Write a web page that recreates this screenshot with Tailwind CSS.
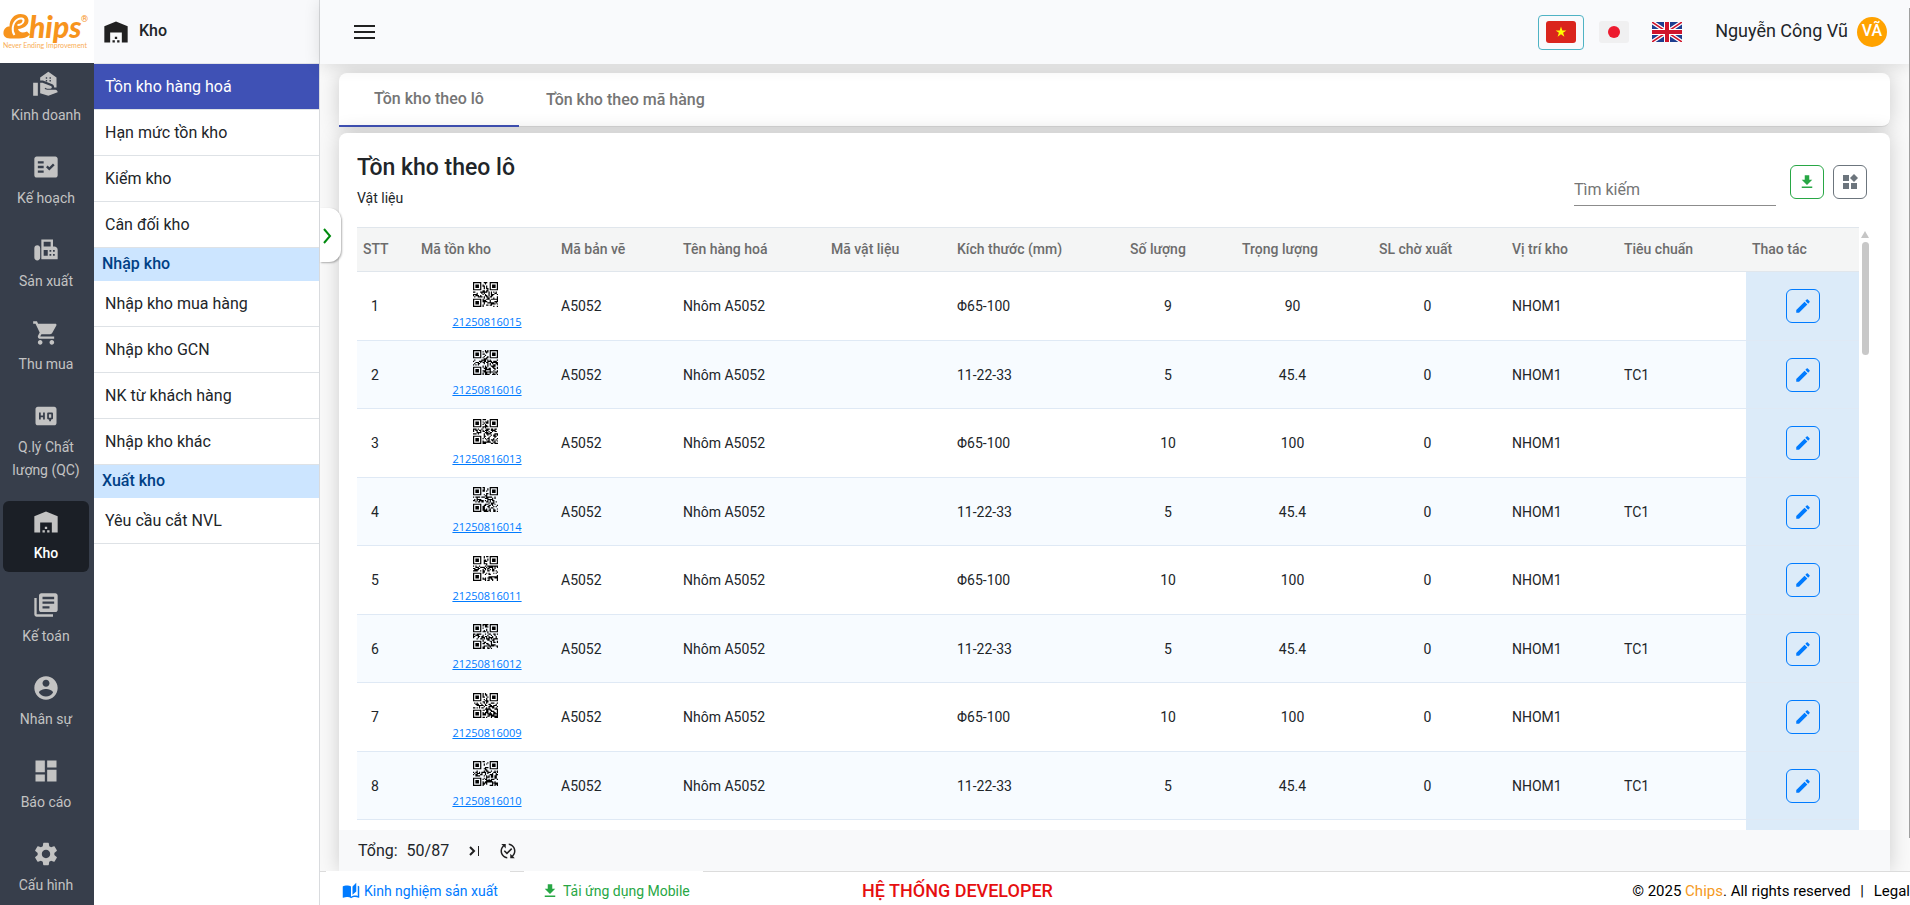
<!DOCTYPE html>
<html lang="vi">
<head>
  <meta charset="UTF-8">
  <meta name="viewport" content="width=device-width, initial-scale=1.0">
  <title>Tồn kho theo lô</title>
  <script src="https://cdn.jsdelivr.net/npm/@tailwindcss/browser@4"></script>
</head>
<body class="h-screen flex overflow-hidden bg-white font-[Roboto,sans-serif] text-[#212529]">

  <!-- Icon set -->
  <svg class="hidden">
    <symbol id="i-sales" viewBox="0 0 24 24"><path d="M1 11h4v11H1zM20 17h-7l-2.1-.7.3-1L13 16h2.8c.7 0 1.2-.5 1.2-1.2 0-.5-.3-.9-.8-1.1L9 11H7v9l7 2 8-3c0-1.100-.9-2-2-2z"/><path fill-rule="evenodd" d="M14 1.500L7 6.500V9h2.400l8 3.200c1 .4 1.600 1.500 1.600 2.800h2V6.500zM11.800 6.200h1.200v1.200h-1.200zM15 6.200h1.200v1.200H15zM11.800 8.600h1.200v1.200h-1.200zM15 8.600h1.200v1.200H15z"/></symbol>
    <symbol id="i-plan" viewBox="0 0 24 24"><path fill-rule="evenodd" d="M20 3H4c-1.100 0-2 .9-2 2v14c0 1.100.9 2 2 2h16c1.100 0 2-.9 2-2V5c0-1.100-.9-2-2-2zM10 17H5v-2h5v2zm0-4H5v-2h5v2zm0-4H5V7h5v2zm4.820 6L12 12.160l1.410-1.410 1.410 1.420L17.990 9l1.420 1.420L14.820 15z"/></symbol>
    <symbol id="i-fax" viewBox="0 0 24 24"><path fill-rule="evenodd" d="M4.500 8C3.100 8 2 9.100 2 10.500v8C2 19.900 3.100 21 4.500 21S7 19.900 7 18.500v-8C7 9.100 5.900 8 4.500 8zM19 9h-1V3H8v17h14v-8c0-1.700-1.300-3-3-3zM10 5h6v4h-6zM10 12h3.500v5H10zM15 12h1.500v1.500H15zM18 12h1.500v1.500H18zM15 15.500h1.500V17H15zM18 15.500h1.500V17H18z"/></symbol>
    <symbol id="i-cart" viewBox="0 0 24 24"><path d="M7 18c-1.100 0-1.990.9-1.990 2S5.900 22 7 22s2-.9 2-2-.9-2-2-2zM1 2v2h2l3.600 7.590-1.350 2.450c-.16.28-.25.61-.25.96 0 1.100.9 2 2 2h12v-2H7.420c-.14 0-.25-.11-.25-.25l.03-.12.9-1.630h7.450c.75 0 1.410-.41 1.750-1.030l3.580-6.490c.08-.14.12-.31.12-.48 0-.55-.45-1-1-1H5.210l-.94-2H1zm16 16c-1.100 0-1.990.9-1.990 2s.89 2 1.990 2 2-.9 2-2-.9-2-2-2z"/></symbol>
    <symbol id="i-hq" viewBox="0 0 24 24"><path d="M19 4H5c-1.110 0-2 .9-2 2v12c0 1.100.89 2 2 2h14c1.100 0 2-.9 2-2V6c0-1.100-.9-2-2-2zm-8 11H9.500v-2h-2v2H6V9h1.500v2.500h2V9H11v6zm7-1c0 .55-.45 1-1 1h-.75v1.500h-1.500V15H14c-.55 0-1-.45-1-1v-4c0-.55.45-1 1-1h3c.55 0 1 .45 1 1v4zm-3.500-.5h2v-3h-2v3z"/></symbol>
    <symbol id="i-warehouse" viewBox="0 0 24 24"><path d="M2 21h5v-8.500h10V21h5V7L12 3 2 7v14zM9 19h2v2H9zM11 16h2v2h-2zM13 19h2v2h-2z"/></symbol>
    <symbol id="i-books" viewBox="0 0 24 24"><path d="M4 6H2v14c0 1.100.9 2 2 2h14v-2H4V6zm16-4H8c-1.100 0-2 .9-2 2v12c0 1.100.9 2 2 2h12c1.100 0 2-.9 2-2V4c0-1.100-.9-2-2-2zm-1 9H9V9h10v2zm-4 4H9v-2h6v2zm4-8H9V5h10v2z"/></symbol>
    <symbol id="i-user" viewBox="0 0 24 24"><path d="M12 2C6.480 2 2 6.480 2 12s4.480 10 10 10 10-4.480 10-10S17.520 2 12 2zm0 3c1.660 0 3 1.340 3 3s-1.340 3-3 3-3-1.340-3-3 1.340-3 3-3zm0 14.200c-2.500 0-4.710-1.280-6-3.220.03-1.990 4-3.080 6-3.080 1.990 0 5.970 1.090 6 3.080-1.290 1.940-3.500 3.220-6 3.220z"/></symbol>
    <symbol id="i-dashboard" viewBox="0 0 24 24"><path d="M3 13h8V3H3v10zm0 8h8v-6H3v6zm10 0h8V11h-8v10zm0-18v6h8V3h-8z"/></symbol>
    <symbol id="i-settings" viewBox="0 0 24 24"><path d="M19.140 12.940c.04-.3.060-.61.060-.94 0-.32-.02-.64-.07-.94l2.030-1.580c.18-.14.23-.41.12-.61l-1.920-3.320c-.12-.22-.37-.29-.59-.22l-2.390.96c-.5-.38-1.030-.7-1.620-.94l-.36-2.540c-.04-.24-.24-.41-.48-.41h-3.840c-.24 0-.43.17-.47.41l-.36 2.540c-.59.24-1.130.57-1.620.94l-2.390-.96c-.22-.08-.47 0-.59.22L2.740 8.870c-.12.21-.08.47.12.61l2.030 1.580c-.05.3-.09.63-.09.94s.02.64.07.94l-2.030 1.580c-.18.14-.23.41-.12.61l1.920 3.320c.12.22.37.29.59.22l2.390-.96c.5.38 1.030.7 1.620.94l.36 2.540c.05.24.24.41.48.41h3.840c.24 0 .44-.17.47-.41l.36-2.540c.59-.24 1.130-.56 1.620-.94l2.390.96c.22.08.47 0 .59-.22l1.920-3.320c.12-.22.070-.47-.12-.61l-2.010-1.580zM12 15.600c-1.980 0-3.600-1.620-3.600-3.600s1.620-3.600 3.600-3.600 3.600 1.620 3.600 3.600-1.620 3.600-3.600 3.600z"/></symbol>
    <symbol id="i-download" viewBox="0 0 24 24"><path d="M5 20h14v-2H5v2zM19 9h-4V3H9v6H5l7 7 7-7z"/></symbol>
    <symbol id="i-edit" viewBox="0 0 24 24"><path d="M3 17.250V21h3.750L17.810 9.940l-3.750-3.750L3 17.250zM20.710 7.040c.39-.39.39-1.020 0-1.410l-2.340-2.340c-.39-.39-1.020-.39-1.410 0l-1.830 1.830 3.750 3.750 1.830-1.830z"/></symbol>
    <symbol id="i-refresh" viewBox="0 0 24 24"><path d="M17.660 9.530l-7.070 7.070-4.240-4.240 1.410-1.410 2.830 2.830 5.660-5.660 1.410 1.410zM4 12c0-2.330 1.020-4.420 2.620-5.880L9 8.500v-6H3l2.200 2.200C3.240 6.520 2 9.110 2 12c0 5.190 3.950 9.450 9 9.950v-2.020c-3.940-.49-7-3.860-7-7.930zm18 0c0-5.190-3.950-9.450-9-9.950v2.020c3.940.49 7 3.860 7 7.930 0 2.330-1.020 4.420-2.620 5.880L15 15.500v6h6l-2.200-2.200c1.960-1.820 3.200-4.410 3.200-7.300z"/></symbol>
    <symbol id="i-book" viewBox="0 0 24 24"><path d="M19 1l-5 5v11l5-4.500V1zM1 6v14.650c0 .25.25.5.5.5C3.100 20.450 5.050 20 6.500 20c1.950 0 4.050.4 5.500 1.500V6c-1.450-1.100-3.550-1.500-5.500-1.500S2.450 4.900 1 6zM23 19.500V6c-.6-.45-1.250-.75-2-1v13.500c-1.100-.35-2.300-.5-3.500-.5-1.700 0-4.150.65-5.500 1.500v2c1.350-.85 3.800-1.500 5.500-1.500 1.650 0 3.350.3 4.750 1.050.4.150.75-.15.75-.45z"/></symbol>
  </svg>

  <!-- Main menu -->
  <aside class="w-[94px] shrink-0 flex flex-col bg-[#373e4b]">
    <a href="#" class="h-[63px] bg-white shrink-0" aria-label="Chips">
      <svg width="94" height="63" viewBox="0 0 94 63">
        <path fill="#f7941d" d="M10 38.500C5 38.500 3 35.500 3.500 32c.5-3.500 3-5.500 6-5.500C9.500 19.500 14 14 20.500 14c5 0 8 2.800 8 6.500 0 4.500-4 8-10.500 8.500 1 3.500 4.500 4.500 9 2.500l3 3c-3 3-7 4-11 4z"/>
        <path fill="none" stroke="#fff" stroke-width="2" d="M14.500 35c-3-4-2.500-12 3-15.500 3-2 6.500-1 6 1.500-.5 2.500-3.500 4-6 4"/>
        <text x="29" y="38" font-family="Lato" font-weight="900" font-style="italic" font-size="30" fill="#f7941d">hips</text>
        <text x="81" y="22" font-family="Roboto" font-weight="500" font-size="9" fill="#f7941d">®</text>
        <text x="3" y="48" font-family="Lato" font-size="7" fill="#f9ae56">Never Ending Improvement</text>
      </svg>
    </a>
    <nav class="flex flex-col gap-3 pl-[3px] pr-[5px] text-center text-sm leading-[23px] text-[#c3c3c3] fill-[#c3c3c3]">
      <a href="#" class="flex flex-col items-center gap-[6px] rounded-md px-1 py-[7px]"><svg class="size-7"><use href="#i-sales"/></svg>Kinh doanh</a>
      <a href="#" class="flex flex-col items-center gap-[6px] rounded-md px-1 py-[7px]"><svg class="size-7"><use href="#i-plan"/></svg>Kế hoạch</a>
      <a href="#" class="flex flex-col items-center gap-[6px] rounded-md px-1 py-[7px]"><svg class="size-7"><use href="#i-fax"/></svg>Sản xuất</a>
      <a href="#" class="flex flex-col items-center gap-[6px] rounded-md px-1 py-[7px]"><svg class="size-7"><use href="#i-cart"/></svg>Thu mua</a>
      <a href="#" class="flex flex-col items-center gap-[6px] rounded-md px-1 py-[7px]"><svg class="size-7"><use href="#i-hq"/></svg>Q.lý Chất lượng (QC)</a>
      <a href="#" class="flex flex-col items-center gap-[6px] rounded-md px-1 py-[7px] bg-[#1b1f26] font-medium text-white" aria-current="page"><svg class="size-7"><use href="#i-warehouse"/></svg>Kho</a>
      <a href="#" class="flex flex-col items-center gap-[6px] rounded-md px-1 py-[7px]"><svg class="size-7"><use href="#i-books"/></svg>Kế toán</a>
      <a href="#" class="flex flex-col items-center gap-[6px] rounded-md px-1 py-[7px]"><svg class="size-7"><use href="#i-user"/></svg>Nhân sự</a>
      <a href="#" class="flex flex-col items-center gap-[6px] rounded-md px-1 py-[7px]"><svg class="size-7"><use href="#i-dashboard"/></svg>Báo cáo</a>
      <a href="#" class="flex flex-col items-center gap-[6px] rounded-md px-1 py-[7px]"><svg class="size-7"><use href="#i-settings"/></svg>Cấu hình</a>
    </nav>
  </aside>

  <!-- Sub menu -->
  <aside class="w-[226px] shrink-0 border-r border-[#d9dbde] bg-white">
    <div class="h-16 flex items-center gap-2 pl-2 bg-[#f8f9fb] border-b border-[#e3e4e8] font-medium">
      <svg class="size-7 fill-[#212121]"><use href="#i-warehouse"/></svg>
      <span class="pl-px pb-[2px]">Kho</span>
    </div>
    <nav class="leading-[45px]">
      <a href="#" class="block pl-[11px] border-b border-[#dee2e6] bg-[#3f51b5] text-white">Tồn kho hàng hoá</a>
      <a href="#" class="block pl-[11px] border-b border-[#dee2e6]">Hạn mức tồn kho</a>
      <a href="#" class="block pl-[11px] border-b border-[#dee2e6]">Kiểm kho</a>
      <a href="#" class="block pl-[11px] border-b border-[#dee2e6]">Cân đối kho</a>
      <h3 class="h-[33px] leading-8 pl-2 bg-[#cce5ff] font-medium text-[#004085]">Nhập kho</h3>
      <a href="#" class="block pl-[11px] border-b border-[#dee2e6]">Nhập kho mua hàng</a>
      <a href="#" class="block pl-[11px] border-b border-[#dee2e6]">Nhập kho GCN</a>
      <a href="#" class="block pl-[11px] border-b border-[#dee2e6]">NK từ khách hàng</a>
      <a href="#" class="block pl-[11px] border-b border-[#dee2e6]">Nhập kho khác</a>
      <h3 class="h-[33px] leading-8 pl-2 bg-[#cce5ff] font-medium text-[#004085]">Xuất kho</h3>
      <a href="#" class="block pl-[11px] border-b border-[#dee2e6]">Yêu cầu cắt NVL</a>
    </nav>
  </aside>

  <div class="relative flex-1 min-w-0 flex flex-col bg-[#f9f9f9]">

    <!-- Top bar -->
    <header class="relative z-10 h-16 shrink-0 flex items-center pl-[34px] pr-[23px] bg-[#f9fafc] shadow-[0_2px_16px_rgba(0,0,0,0.12)]">
      <button type="button" aria-label="Menu">
        <svg width="21" height="14"><path d="M0 0h21v2H0zM0 6h21v2H0zM0 12h21v2H0z" fill="#212121"/></svg>
      </button>
      <div class="ml-auto flex items-center">
        <button type="button" class="w-[46px] h-[35px] flex items-center justify-center border border-[#4fb3c4] rounded" aria-label="Tiếng Việt">
          <svg width="30" height="22"><rect width="30" height="22" rx="3" fill="#da251d"/><path d="M15 5.500l1.300 3.900h4.100l-3.300 2.400 1.300 3.900-3.400-2.400-3.400 2.400 1.300-3.900-3.300-2.400h4.100z" fill="#ff0"/></svg>
        </button>
        <button type="button" class="ml-[15px]" aria-label="日本語">
          <svg width="30" height="22"><rect width="30" height="22" rx="3" fill="#f0f0f1"/><circle cx="15" cy="11" r="6" fill="#ed1b2f"/></svg>
        </button>
        <button type="button" class="ml-[23px]" aria-label="English">
          <svg width="30" height="20" viewBox="0 0 30 20"><path fill="#1d3d8f" d="M0 0h30v20H0z"/><path d="M0 0l30 20M30 0L0 20" stroke="#fff" stroke-width="4"/><path d="M0 0l30 20M30 0L0 20" stroke="#cf142b" stroke-width="1.500"/><path d="M15 0v20M0 10h30" stroke="#fff" stroke-width="6"/><path d="M15 0v20M0 10h30" stroke="#cf142b" stroke-width="4"/></svg>
        </button>
        <span class="ml-[33px] pb-[2px] text-lg leading-7">Nguyễn Công Vũ</span>
        <span class="ml-[9px] size-[30px] rounded-full bg-[#ffa200] text-white font-medium text-center leading-7">VÃ</span>
      </div>
    </header>

    <button type="button" class="absolute z-20 left-0 top-52 w-[21px] h-[54px] flex items-center pt-[2px] pl-[3px] rounded-r-xl bg-white shadow-[1px_1px_2px_rgba(0,0,0,0.3)]" aria-label="Thu gọn menu">
      <svg width="9" height="16" fill="none" stroke="#008a0e" stroke-width="2"><path d="M1 1l6 7-6 7"/></svg>
    </button>

    <main class="flex-1 min-h-0 flex flex-col gap-[6px] pt-[9px] pl-[19px] pr-5">
      <div role="tablist" class="h-[54px] shrink-0 flex rounded-lg rounded-bl-none bg-white shadow-[0_0_20px_rgba(0,0,0,0.18)] border-b border-[#d5d5d5] font-medium text-[#757575]">
        <button type="button" role="tab" aria-selected="true" class="w-[180px] border-b-2 border-[#3f51b5] -mb-px">Tồn kho theo lô</button>
        <button type="button" role="tab" aria-selected="false" class="px-[27px]">Tồn kho theo mã hàng</button>
      </div>

      <section class="flex-1 min-h-0 flex flex-col rounded-t-lg bg-white shadow-[0_0_20px_rgba(0,0,0,0.18)]">
        <div class="h-[94px] shrink-0 flex items-center pl-[18px] pr-[23px] pt-1">
          <div>
            <h1 class="text-[23px] font-medium leading-8">Tồn kho theo lô</h1>
            <p class="text-sm leading-7">Vật liệu</p>
          </div>
          <input type="text" placeholder="Tìm kiếm" aria-label="Tìm kiếm" class="ml-auto mt-4 w-[202px] h-8 border-b border-[#8c8c8c] placeholder:text-[#757575] focus:outline-none">
          <button type="button" class="ml-[14px] size-[34px] flex items-center justify-center rounded-md border border-[#28a745]" aria-label="Tải xuống"><svg class="size-[18px] fill-[#28a745]"><use href="#i-download"/></svg></button>
          <button type="button" class="ml-[9px] size-[34px] flex items-center justify-center rounded-md border border-[#6c757d]" aria-label="Tuỳ chọn cột"><svg width="16" height="16" fill="#6c757d"><path d="M1 1h6v6H1zM1 9h6v6H1zM9 9h6v6H9zM12 0l4 4-4 4-4-4z"/></svg></button>
        </div>

        <div class="flex-1 min-h-0 flex pl-[18px] pr-[19px]">
          <div class="flex-1 min-w-0 overflow-hidden">
            <table class="w-full table-fixed border-separate border-spacing-0 text-sm leading-5">
              <colgroup>
                <col class="w-[58px]"><col class="w-[140px]"><col class="w-[122px]"><col class="w-[148px]">
                <col class="w-[126px]"><col class="w-[173px]"><col class="w-[112px]"><col class="w-[137px]">
                <col class="w-[133px]"><col class="w-[112px]"><col class="w-[128px]"><col class="w-[113px]">
              </colgroup>
              <thead>
                <tr class="h-[45px] text-left text-[#6c6c6c] bg-[#f4f5f5] whitespace-nowrap *:border-y *:border-[#e0e6ec] *:pl-[6px] *:pb-[2px] *:font-medium">
                  <th>STT</th><th>Mã tồn kho</th><th>Mã bản vẽ</th><th>Tên hàng hoá</th>
                  <th>Mã vật liệu</th><th>Kích thước (mm)</th><th>Số lượng</th><th>Trọng lượng</th>
                  <th>SL chờ xuất</th><th>Vị trí kho</th><th>Tiêu chuẩn</th><th>Thao tác</th>
                </tr>
              </thead>
              <tbody id="rows"></tbody>
            </table>
          </div>
          <div class="w-3 shrink-0 flex flex-col items-center gap-1 pt-1">
            <svg width="8" height="7"><path d="M4 0l4 7H0z" fill="#c6c6c6"/></svg>
            <div class="w-[7px] h-[113px] rounded-full bg-[#c8c8c8]"></div>
          </div>
        </div>

        <div class="h-[41px] shrink-0 flex items-center pl-[19px] bg-[#f8f9fa]">
          <span>Tổng:</span>
          <span class="ml-[9px]">50/87</span>
          <button type="button" class="ml-5" aria-label="Trang cuối"><svg width="12" height="12" fill="none" stroke="#212121"><path d="M1 2l4 4-4 4" stroke-width="2"/><path d="M9.500 1v10"/></svg></button>
          <button type="button" class="ml-[18px]" aria-label="Tải lại"><svg class="size-[18px] fill-[#212121]"><use href="#i-refresh"/></svg></button>
        </div>
      </section>
    </main>

    <!-- Footer -->
    <footer class="relative z-10 h-[34px] shrink-0 flex items-center whitespace-nowrap bg-white border-t border-[#dcdcdc] pl-[6px] text-sm">
      <a href="#" class="w-[184px] h-[34px] -mt-px flex items-center gap-1 pl-4 pt-[6px] bg-white text-[#007bff]"><svg class="size-[18px] fill-[#007bff]"><use href="#i-book"/></svg>Kinh nghiệm sản xuất</a>
      <a href="#" class="ml-[14px] w-[179px] h-[34px] -mt-px flex items-center gap-1 pl-[17px] pt-[6px] bg-white text-[#28a745]"><svg class="size-[18px] fill-[#28a745]"><use href="#i-download"/></svg>Tải ứng dụng Mobile</a>
      <strong class="ml-[159px] pt-1 text-lg font-medium text-[#e60f0f]">HỆ THỐNG DEVELOPER</strong>
      <p class="ml-auto pt-[6px] text-[15px] text-black">© 2025 <a href="#" class="text-[#f59a23]">Chips</a>. All rights reserved <span class="mx-[6px]">|</span> <a href="#">Legal</a></p>
    </footer>

    <div class="absolute z-20 right-0 top-2 w-px h-[830px] bg-[#a0a0a0]"></div>
  </div>

  <script>
    const items = [
      { code: '21250816015', size: 'Φ65-100', qty: 9, weight: 90, std: '' },
      { code: '21250816016', size: '11-22-33', qty: 5, weight: 45.4, std: 'TC1' },
      { code: '21250816013', size: 'Φ65-100', qty: 10, weight: 100, std: '' },
      { code: '21250816014', size: '11-22-33', qty: 5, weight: 45.4, std: 'TC1' },
      { code: '21250816011', size: 'Φ65-100', qty: 10, weight: 100, std: '' },
      { code: '21250816012', size: '11-22-33', qty: 5, weight: 45.4, std: 'TC1' },
      { code: '21250816009', size: 'Φ65-100', qty: 10, weight: 100, std: '' },
      { code: '21250816010', size: '11-22-33', qty: 5, weight: 45.4, std: 'TC1' },
    ];

    // 21x21 code thumbnail: three finder squares, the rest seeded from the stock code
    function qrPath(code) {
      let seed = Number(code) % 2147483647;
      let d = '';
      for (let y = 0; y < 21; y++) {
        for (let x = 0; x < 21; x++) {
          seed = (seed * 48271) % 2147483647;
          const corner = (x < 8 && y < 8) || (x > 12 && y < 8) || (x < 8 && y > 12);
          let on = seed % 100 < 50;
          if (corner) {
            const fx = x > 12 ? x - 14 : x;
            const fy = y > 12 ? y - 14 : y;
            const ring = Math.max(Math.abs(fx - 3), Math.abs(fy - 3));
            on = ring === 3 || ring < 2;
          }
          if (on) d += `M${x} ${y}h1v1h-1z`;
        }
      }
      return d;
    }

    const body = document.getElementById('rows');
    body.innerHTML = items.map((item, i) => `
      <tr class="h-[69px] even:h-[68px] even:bg-[#f7fbff] *:border-b *:border-[#dfe9f5] *:pl-[6px]">
        <td class="text-center pr-7">${i + 1}</td>
        <td class="pr-[2px]">
          <div class="flex flex-col items-center gap-[7px] pb-px">
            <svg class="mr-1" width="25" height="25" viewBox="0 0 21 21"><path d="${qrPath(item.code)}"/></svg>
            <a href="#" class="font-['Open_Sans'] text-[11px] leading-4 text-[#007bff] underline">${item.code}</a>
          </div>
        </td>
        <td>A5052</td>
        <td>Nhôm A5052</td>
        <td></td>
        <td>${item.size}</td>
        <td class="text-center pr-[30px]">${item.qty}</td>
        <td class="text-center pr-[30px]">${item.weight}</td>
        <td class="text-center pr-[30px]">0</td>
        <td>NHOM1</td>
        <td>${item.std}</td>
        <td class="bg-[#dcebf9] pr-[6px]">
          <button type="button" class="mx-auto size-[34px] flex items-center justify-center rounded-md border border-[#007bff]" aria-label="Sửa">
            <svg class="size-[18px] fill-[#007bff]"><use href="#i-edit"/></svg>
          </button>
        </td>
      </tr>`).join('') + '<tr class="h-[69px]"><td colspan="11"></td><td class="bg-[#dcebf9]"></td></tr>';
  </script>
</body>
</html>
